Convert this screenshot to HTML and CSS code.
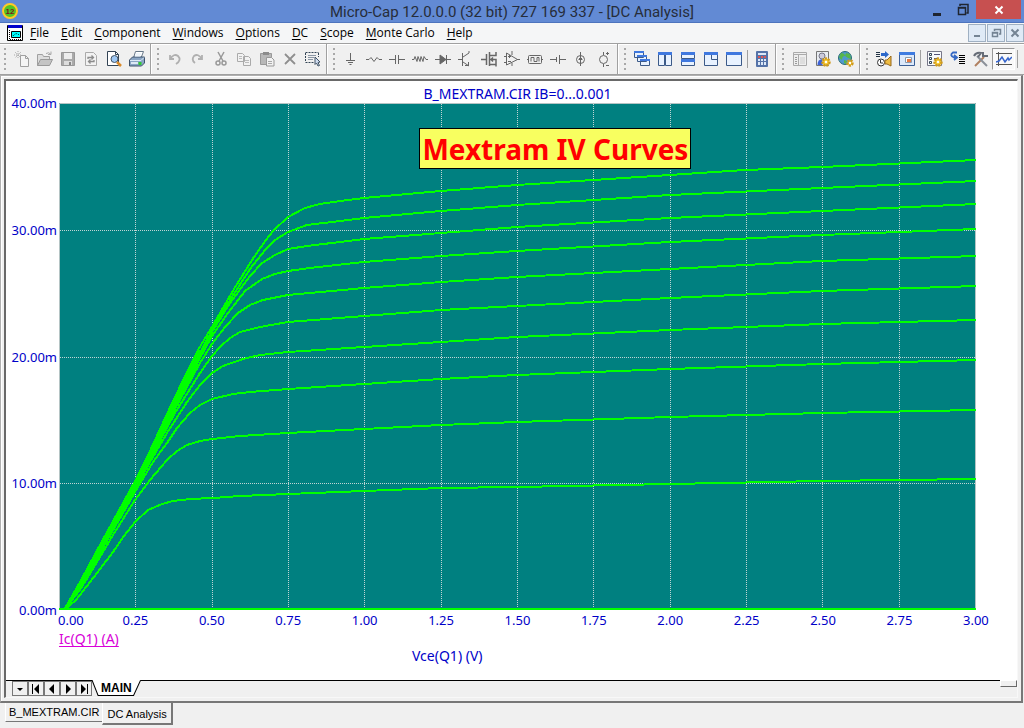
FILE: index.html
```html
<!DOCTYPE html>
<html lang="en">
<head>
<meta charset="utf-8">
<title>Micro-Cap 12.0.0.0 (32 bit) 727 169 337 - [DC Analysis]</title>
<link rel="stylesheet" href="styles.css">
</head>
<body>
<header class="titlebar">
  <svg class="app-icon" width="20" height="20" viewBox="0 0 20 20" aria-hidden="true"><circle cx="10" cy="11" r="7" fill="#52c424" stroke="#ffc928" stroke-width="2"/><text class="app-num" x="10" y="14" text-anchor="middle">12</text></svg>
  <h1 class="title">Micro-Cap 12.0.0.0 (32 bit) 727 169 337 - [DC Analysis]</h1>
  <div class="win-buttons">
    <button class="win" aria-label="Minimize"><svg width="12" height="14"><path d="M2 11.5h8" stroke="#1f2530" stroke-width="3"/></svg></button>
    <button class="win" aria-label="Restore"><svg width="12" height="14"><path d="M3 3V1.5h8V10H9.500M1.500 4.500h7v7h-7zM1 5h8" fill="none" stroke="#1f2530" stroke-width="1.500"/></svg></button>
    <button class="win win-close" aria-label="Close"><svg width="10" height="10"><path d="M1.500 1.500l7 7m0-7l-7 7" stroke="#fff" stroke-width="2"/></svg></button>
  </div>
</header>

<nav class="menubar">
  <svg class="doc-icon" width="16" height="16" viewBox="0 0 16 16" aria-hidden="true"><path d="M.5.5h15v15H.5z" fill="#fff" stroke="#000"/><path d="M1 0h14v3H1z" fill="#00c"/><path d="M4.500 6.500h9v6h-9z" fill="#0ff" stroke="#000"/><path d="M6 11q3-4 6-1M2.500 5v9M3 14.500h11" fill="none" stroke="#000" stroke-dasharray="1 1"/></svg>
  <button><u>F</u>ile</button><button><u>E</u>dit</button><button><u>C</u>omponent</button><button><u>W</u>indows</button><button><u>O</u>ptions</button><button><u>D</u>C</button><button><u>S</u>cope</button><button><u>M</u>onte Carlo</button><button><u>H</u>elp</button>
  <div class="child-buttons">
    <button aria-label="Minimize document"><svg width="12" height="12"><path d="M3 9h6" stroke="#748494" stroke-width="2"/></svg></button>
    <button aria-label="Restore document"><svg width="12" height="12"><path d="M4.500 4V2.500h6V7H9M2.500 5.500h5v4h-5zM4 2.500h7M2 6h6" fill="none" stroke="#748494" stroke-width="1.500"/></svg></button>
    <button aria-label="Close document"><svg width="12" height="12"><path d="M2.500 2.500l7 7m0-7l-7 7" stroke="#748494" stroke-width="2"/></svg></button>
  </div>
</nav>

<div class="toolbar" role="toolbar" aria-label="Main">
  <div class="group"><i class="grip"></i>
    <button aria-label="New"><svg viewBox="0 0 16 16"><path d="M6.500 4.500h5l3 3v8h-8z" fill="#f5f5f5" stroke="#a0a0a0"/><path d="M11.500 4.500v3h3" fill="none" stroke="#a0a0a0"/><path d="M4 0v8M0 4h8M1 1l6 6M7 1L1 7" stroke="#aaa" stroke-dasharray="1 1"/></svg></button>
    <button aria-label="Open"><svg viewBox="0 0 16 16"><path d="M.5 14.500v-11h5l1 2h6v3" fill="#ddd" stroke="#a0a0a0"/><path d="M.5 14.500l3-6h12l-3 6z" fill="#c4c4c4" stroke="#999"/><path d="M9 2.500q3-2 5 1m0-3v3h-3" fill="none" stroke="#aaa"/></svg></button>
    <button aria-label="Save"><svg viewBox="0 0 16 16"><path d="M1.500 1.500h13v13h-13z" fill="#aaa" stroke="#999"/><path d="M4 2h8v6H4z" fill="#eee"/><path d="M4 10h8v4H4z" fill="#ddd"/><path d="M9 11h2v3H9z" fill="#888"/></svg></button>
    <button aria-label="Revert"><svg viewBox="0 0 16 16"><path d="M2.500 1.500h8l3 3v10h-11z" fill="#f2f2f2" stroke="#aaa"/><path d="M5 8V6.500h5M8.500 4.500l2 2-2 2M11 9v1.500H6M7.500 8.500l-2 2 2 2" fill="none" stroke="#8c8c8c" stroke-width="1.300"/></svg></button>
    <button aria-label="Print preview"><svg viewBox="0 0 16 16"><path d="M1.500.5h8l3 3v11h-11z" fill="#fff" stroke="#345"/><path d="M9.500.5v3h3" fill="none" stroke="#345"/><circle cx="8.500" cy="8" r="3.500" fill="#9ec8f5" stroke="#456"/><path d="M11 11l4 4" stroke="#d98a2b" stroke-width="2.500"/></svg></button>
    <button aria-label="Print"><svg viewBox="0 0 16 16"><path d="M4.500 7l2-6.500h8L12 7" fill="#fff" stroke="#678"/><path d="M.5 9l3-3h12v6l-3 3H.5z" fill="#8aa5c4" stroke="#3d526c"/><path d="M1 9.500h11l3-3M7 3h5M6 5h5" fill="none" stroke="#dceaf6"/><path d="M2 11h7v2H2z" fill="#dce8f4"/><path d="M9.500 11h3v3h-3z" fill="#32c932"/></svg></button>
  </div>
  <div class="group"><i class="grip"></i>
    <button aria-label="Undo"><svg viewBox="0 0 16 16"><path d="M3 4v4h4M3 8q4-6 8-3 4 4-2 8" fill="none" stroke="#b0b0b0" stroke-width="1.800"/></svg></button>
    <button aria-label="Redo"><svg viewBox="0 0 16 16"><path d="M12 4v4H8M12 8Q8 2 4 5q-3 4 1 7" fill="none" stroke="#b0b0b0" stroke-width="1.800"/></svg></button>
    <button aria-label="Cut"><svg viewBox="0 0 16 16"><path d="M5 1l5 9M11 1L6 10" stroke="#999" stroke-width="1.500"/><circle cx="5" cy="12" r="2" fill="none" stroke="#999" stroke-width="1.500"/><circle cx="11" cy="12" r="2" fill="none" stroke="#999" stroke-width="1.500"/></svg></button>
    <button aria-label="Copy"><svg viewBox="0 0 16 16"><path d="M1.500 2.500h5l2 2v6h-7zM7.500 5.500h5l2 2v7h-7z" fill="#f2f2f2" stroke="#aaa"/><path d="M3 5.500h3M3 7.500h3M9 9.500h4M9 11.500h4" stroke="#bbb"/></svg></button>
    <button aria-label="Paste"><svg viewBox="0 0 16 16"><path d="M1.500 2.500h11v11h-11z" fill="#b8b8b8" stroke="#999"/><path d="M4 1h6v3H4z" fill="#8c8c8c"/><path d="M7.500 6.500h5l2.500 2.500v6H7.500z" fill="#f2f2f2" stroke="#999"/><path d="M9 10.500h4M9 12.500h4" stroke="#aaa"/></svg></button>
    <button aria-label="Delete"><svg viewBox="0 0 16 16"><path d="M3 3l10 10M13 3L3 13" stroke="#8f8f8f" stroke-width="1.800"/></svg></button>
    <button aria-label="Select mode"><svg viewBox="0 0 16 16"><path d="M.5 1.500h13M.5 2v9M.5 11.500h9M13.500 2v4" fill="none" stroke="#345" stroke-dasharray="2 1"/><path d="M3 4.500h8M3 6.500h6M3 8.500h5" stroke="#8a96a4"/><path d="M10 6l5 5-2 .5 1.500 3-1.500.5-1.500-3-1.500 1.500z" fill="#cfdcf0" stroke="#456"/></svg></button>
  </div>
  <div class="group parts"><i class="grip"></i>
    <button aria-label="Ground"><svg viewBox="0 0 16 16"><path d="M7.500 2v7M3 9.500h9M5 11.500h5M6.500 13.500h2"/></svg></button>
    <button aria-label="Resistor"><svg viewBox="0 0 16 16"><path d="M0 8.500h3l2-2 3 4 3-4 2 2h3"/></svg></button>
    <button aria-label="Capacitor"><svg viewBox="0 0 16 16"><path d="M0 8.500h6.500M9.500 8.500H16M6.500 4v9M9.500 4v9"/></svg></button>
    <button aria-label="Inductor"><svg viewBox="0 0 16 16"><path d="M0 8.500h2l1-3 2 5 1-5 2 5 1-5 2 5 1-5 2 3h2"/></svg></button>
    <button aria-label="Diode"><svg viewBox="0 0 16 16"><path d="M0 8.500h16M11.500 4v9"/><path d="M5 4l6 4.500L5 13z" class="solid"/></svg></button>
    <button aria-label="NPN transistor"><svg viewBox="0 0 16 16"><path d="M0 8.500h4M4.500 2v13M5 6l6-4V0M5 11l6 4M7 14.500h4M10.500 11v4"/></svg></button>
    <button aria-label="MOSFET"><svg viewBox="0 0 16 16"><path d="M0 8.500h5M5.500 3v11M8.500 1v14M9 4.500h6V1M9 8.500h6v7M9 13.500h6M10 8.500l2-2m-2 2l2 2" stroke-width="1.500"/></svg></button>
    <button aria-label="Op amp"><svg viewBox="0 0 16 16"><path d="M2.500 2v12l11-5.500zM0 5.500h3M0 11.500h3M13 8.500h3M4 5.500h3M4 10.500h3M5.500 4v3M8 0v4M8 12v3"/></svg></button>
    <button aria-label="Macro"><svg viewBox="0 0 16 16"><rect x="1.500" y="4.500" width="13" height="8" rx="1"/><path d="M0 8.500h1M15 8.500h1M4 10.500v-4h3v4h3v-4h2v4"/></svg></button>
    <button aria-label="Battery"><svg viewBox="0 0 16 16"><path d="M0 8.500h6M9 8.500h7M6.500 6v5M9.500 4v9"/></svg></button>
    <button aria-label="Current source"><svg viewBox="0 0 16 16"><circle cx="7.500" cy="8.500" r="4"/><path d="M7.500 1v14M5.500 8.500l2-2 2 2M6 8.500h3"/></svg></button>
    <button aria-label="Voltage source"><svg viewBox="0 0 16 16"><circle cx="7.500" cy="8.500" r="4"/><path d="M7.500 1v3M7.500 13v3M10 2.500h3M11.500 1v3M10 14.500h3"/></svg></button>
  </div>
  <div class="group windows"><i class="grip"></i>
    <button aria-label="Cascade"><svg viewBox="0 0 16 16"><path d="M.5.5h9v6h-9zM3.500 4.500h9v6h-9zM6.500 8.500h9v6h-9z"/><path class="bar" d="M0 0h10v2H0zM3 4h10v2H3zM6 8h10v2H6z"/></svg></button>
    <button aria-label="Tile vertical"><svg viewBox="0 0 16 16"><path d="M1.500 1.500h6v13h-6zM8.500 1.500h6v13h-6z"/><path class="bar" d="M1 1h7v3H1zM8 1h7v3H8z"/></svg></button>
    <button aria-label="Tile horizontal"><svg viewBox="0 0 16 16"><path d="M1.500 1.500h13v6h-13zM1.500 8.500h13v6h-13z"/><path class="bar" d="M1 1h14v3H1zM1 8h14v3H1z"/></svg></button>
    <button aria-label="Overlap"><svg viewBox="0 0 16 16"><path d="M1.500 1.500h13v13h-13zM8.500 1.500h6v7h-6z"/><path class="bar" d="M1 1h14v3H1z"/></svg></button>
    <button aria-label="Maximize"><svg viewBox="0 0 16 16"><path d="M.5 1.500h15v13H.5z"/><path class="bar" d="M0 1h16v3H0z"/></svg></button>
    <i class="sep"></i>
    <button aria-label="Calculator"><svg viewBox="0 0 16 16"><rect class="case" x="2" y="0" width="12" height="16" rx="1"/><path class="lcd" d="M4 2h8v2H4z"/><path class="key" d="M4 5h2v2H4zM7 5h2v2H7zM10 5h2v2h-2z"/><path class="lcd" d="M4 8h2v2H4zM7 8h2v2H7zM10 8h2v2h-2zM4 11h2v3H4zM7 11h2v3H7zM10 11h2v3h-2z"/></svg></button>
  </div>
  <div class="group"><i class="grip"></i>
    <button aria-label="Component panel"><svg viewBox="0 0 16 16"><path d="M1.500 1.500h13v13h-13z" fill="#eee" stroke="#aaa"/><path d="M2 3.500h12M6.500 4v10" stroke="#aaa"/><path d="M3 6.500h2M3 8.500h2M3 10.500h2M3 12.500h2" stroke="#999"/><path d="M8 6h5v7H8z" fill="#ddd"/></svg></button>
    <button aria-label="User settings"><svg viewBox="0 0 16 16"><path d="M1.500.5h12v14h-12z" fill="#e9edf2" stroke="#777"/><circle cx="7" cy="5" r="3" fill="#ccd" stroke="#778"/><path d="M2.500 14q0-6 5-6v6z" fill="#3d62d8"/><circle cx="11" cy="11" r="3.500" fill="#f5ca35" stroke="#d09a1c" stroke-width="2.500" stroke-dasharray="2 1"/><circle cx="11" cy="11" r="1.200" fill="#fff"/></svg></button>
    <button aria-label="Web"><svg viewBox="0 0 16 16"><circle cx="7" cy="7" r="6.500" fill="#4f98cf" stroke="#276b78"/><path d="M3 2q4 0 4 3-3 0-3 4-3-2-3-3zM8 2l4 1 1 5-3-1-3-2zM6 9l3 1-1 3-2-1z" fill="#57b64b"/><circle cx="12" cy="12" r="2.500" fill="#f5ca35" stroke="#d09a1c" stroke-width="2.500" stroke-dasharray="2 1"/><circle cx="12" cy="12" r="1.200" fill="#fff"/></svg></button>
  </div>
  <div class="group last"><i class="grip"></i>
    <button aria-label="Run"><svg viewBox="0 0 16 16"><path d="M0 1.500h4M0 3.500h4M0 5.500h4" stroke="#234"/><path d="M5 2h4V0l4 3.500L9 7V5H5z" fill="#2b67c9"/><circle cx="5" cy="11.500" r="3.500" fill="#fff" stroke="#333"/><path d="M4.500 9v3H7" fill="none" stroke="#333"/><path d="M9 9h2l4-4v10l-4-2H9z" fill="#eebc42" stroke="#96681c"/></svg></button>
    <button aria-label="Analysis window"><svg viewBox="0 0 16 16"><path d="M.5 1.500h15v13H.5z" fill="#dce9fb" stroke="#3b5f96"/><path d="M0 1h16v3H0z" fill="#3e7be0"/><path d="M6.500 6.500h6v5h-6z" fill="#fff" stroke="#89a"/><path d="M8 8h4v3H8z" fill="#e87840"/></svg></button>
    <i class="sep"></i>
    <button aria-label="Analysis limits"><svg viewBox="0 0 16 16"><path d="M.5.5h14v14H.5z" fill="#f7f9fc" stroke="#778"/><path d="M2.500 2.500h2v2h-2zM2.500 6.500h2v2h-2zM2.500 10.500h2v2h-2z" fill="none" stroke="#345"/><path d="M7 3.500h6M7 7.500h4" stroke="#557"/><circle cx="11" cy="11" r="3.500" fill="#f5ca35" stroke="#d09a1c" stroke-width="2.500" stroke-dasharray="2 1"/><circle cx="11" cy="11" r="1.200" fill="#fff"/></svg></button>
    <button aria-label="Stepping"><svg viewBox="0 0 16 16"><path d="M7 1.500H3q-4 3 1 5h3M4 4l3 2.500L4 9" fill="none" stroke="#3569c4" stroke-width="1.800"/><path d="M9 4.500h6M9 6.500h6M9 8.500h6M9 10.500h6M9 12.500h6" stroke="#000"/></svg></button>
    <button aria-label="Tools"><svg viewBox="0 0 16 16"><path d="M2 15l9-9" stroke="#b08060" stroke-width="2"/><path d="M4 5l10 10" stroke="#8a8f98" stroke-width="2"/><path d="M10 1v4h5M1 5q2-4 7-3L5 6" fill="none" stroke="#666c76" stroke-width="2"/></svg></button>
    <button class="pressed" aria-label="Plot" aria-pressed="true"><svg viewBox="0 0 16 16"><path d="M2.500 1v14M0 2.500h16M0 13.500h16" stroke="#555"/><path d="M0 11l3-1 3-4 3 5 3-4 1 2 3-3" fill="none" stroke="#3564cc" stroke-width="1.500"/></svg></button>
    <i class="sep"></i>
  </div>
</div>

<main class="child">
  <section class="pane">
    <div class="chart">
      <h2 class="chart-title">B_MEXTRAM.CIR IB=0...0.001</h2>
      <div class="y-axis"><span>40.00m</span><span>30.00m</span><span>20.00m</span><span>10.00m</span><span>0.00m</span></div>
      <div class="plot">
        <svg class="plot-svg" viewBox="59 103 917 507" preserveAspectRatio="none" role="img" aria-label="Collector current against collector-emitter voltage">
          <path class="gridline" d="M135.500 104V610M212.500 104V610M288.500 104V610M364.500 104V610M441.500 104V610M517.500 104V610M593.500 104V610M670.500 104V610M746.500 104V610M822.500 104V610M899.500 104V610M60 230.500H976M60 357.500H976M60 483.500H976"/>
          <path class="edge" d="M59.500 610V103.500H975.500V610"/>
          <polygon class="bundle" points="64,610 76,587 100,544 134,482 150,450 173,401 198,350 202,351 176,405 151,459 137,487 101,550 80,588 66,610"/>
          <g class="curves">
            <polyline points="59,609 976,609"/>
            <polyline points="64,610 76,600 97,573 113,552 124,536 135,522 148,510 162,504 173,501 190,499 213,498 240,496 288,494 364,491 441,488 517,487 670,484 822,481 976,479"/>
            <polyline points="64,610 80,590 100,557 113,535 135,500 150,480 167,460 177,451 187,445 200,441 212,439 240,436 288,433 364,429 441,425 517,422 670,417 822,413 976,410"/>
            <polyline points="64,610 80,588 100,553 135,492 153,462 167,443 177,428 190,413 200,405 212,399 233,394 250,392 288,389 364,384 441,379 517,375 670,369 822,364 976,360"/>
            <polyline points="64,610 80,586 100,550 135,489 150,462 167,433 187,402 200,385 212,373 223,366 243,359 260,355 288,352 364,347 441,342 517,337 670,330 822,324 976,320"/>
            <polyline points="64,610 80,585 100,549 135,487 150,459 175,413 200,373 212,356 220,347 230,338 240,332 260,327 288,322 364,316 441,310 517,306 670,298 822,291 976,286"/>
            <polyline points="64,610 80,584 100,548 135,486 150,457 175,409 200,363 212,344 225,327 238,313 250,305 263,300 288,295 364,288 441,282 517,277 670,269 822,261 976,256"/>
            <polyline points="64,610 80,583 100,547 135,485 150,455 175,407 200,358 212,336 228,313 245,291 262,279 275,274 288,271 310,268 364,262 441,256 517,251 670,242 822,235 976,229"/>
            <polyline points="64,610 80,583 100,546 135,484 150,454 175,405 200,355 212,332 230,303 250,276 262,263 275,255 288,249 307,246 340,242 364,239 441,233 517,227 670,218 822,211 976,204"/>
            <polyline points="64,610 80,582 100,546 134,484 150,453 175,403 200,353 212,330 230,300 250,269 265,250 275,240 288,232 307,225 340,221 364,218 441,211 517,205 670,195 822,188 976,181"/>
            <polyline points="64,610 80,582 100,545 134,483 150,451 173,401 198,350 213,325 234,289 254,257 266,240 273,231 288,217 305,208 320,204 340,201 364,198 441,191 517,185 593,180 670,175 745,170 822,167 976,160"/>
          </g>
        </svg>
        <div class="note">Mextram IV Curves</div>
      </div>
      <div class="x-axis"><span>0.00</span><span>0.25</span><span>0.50</span><span>0.75</span><span>1.00</span><span>1.25</span><span>1.50</span><span>1.75</span><span>2.00</span><span>2.25</span><span>2.50</span><span>2.75</span><span>3.00</span></div>
      <a class="trace" href="#trace">Ic(Q1) (A)</a>
      <div class="x-name">Vce(Q1) (V)</div>
    </div>
    <div class="pages">
      <div class="page-nav">
        <button aria-label="Page list"><svg viewBox="0 0 12 12"><path d="M3 5h6L6 8z"/></svg></button>
        <button aria-label="First page"><svg viewBox="0 0 12 12"><path d="M2 1h1v10H2zM9 1v10L4 6z"/></svg></button>
        <button aria-label="Previous page"><svg viewBox="0 0 12 12"><path d="M8 1v10L3 6z"/></svg></button>
        <button aria-label="Next page"><svg viewBox="0 0 12 12"><path d="M4 1v10l5-5z"/></svg></button>
        <button aria-label="Last page"><svg viewBox="0 0 12 12"><path d="M3 1v10l5-5zM9 1h1v10H9z"/></svg></button>
      </div>
      <button class="page-tab"><svg viewBox="0 0 48 16" preserveAspectRatio="none" aria-hidden="true"><path d="M0 0l6 15.500h35L48 0" fill="#fff"/><path d="M0 0l6 15.500h35L48 0" fill="none" stroke="#000"/></svg><span>MAIN</span></button>
      <div class="rule"></div>
      <div class="splitter"></div>
    </div>
  </section>
</main>

<footer class="docs">
  <button class="doc">B_MEXTRAM.CIR</button><button class="doc active">DC Analysis</button>
</footer>
</body>
</html>
```
FILE: styles.css
```css
* { box-sizing: border-box; }
body {
  margin: 0;
  height: 100vh;
  display: flex;
  flex-direction: column;
  background: #f0f0f0;
  font-family: "Noto Sans", "Open Sans", sans-serif;
  font-size: 12px;
  color: #000;
  overflow: hidden;
}
button {
  margin: 0;
  padding: 0;
  border: 0;
  background: none;
  font: inherit;
  color: inherit;
}
svg { display: block; }

/* title bar */
.titlebar {
  flex: none;
  height: 23px;
  display: grid;
  grid-template-columns: 102px 1fr 102px;
  align-items: start;
  background: #628ad4;
  border-bottom: 1px solid #4d74bd;
}
.app-num { font: bold 8px "Liberation Sans", sans-serif; fill: #7c1818; }
.title {
  margin: 0;
  font: 15px/24px Roboto, sans-serif;
  color: #262d3a;
  text-align: center;
  white-space: nowrap;
}
.win-buttons { display: flex; justify-content: flex-end; padding-right: 3px; }
.win { width: 26px; height: 19px; display: grid; place-items: center; }
.win-close { width: 45px; background: #c75050; }

/* menu bar */
.menubar {
  flex: none;
  height: 20px;
  display: flex;
  align-items: center;
  padding-left: 7px;
  background: #f5f6f7;
  font: 12px/18px "Open Sans", sans-serif;
}
.doc-icon { margin-right: 1px; }
.menubar > button { padding: 0 6px; }
.menubar u { text-underline-offset: 2px; }
.child-buttons { margin-left: auto; display: flex; gap: 1px; }
.child-buttons button {
  width: 18px;
  height: 18px;
  display: grid;
  place-items: center;
  border: 1px solid #9fb0c2;
  background: #dfeaf6;
}

/* toolbar */
.toolbar {
  flex: none;
  height: 32px;
  display: flex;
  border-top: 1px solid #a0a0a0;
  border-bottom: 1px solid #a0a0a0;
  box-shadow: inset 0 1px #fff;
  overflow: hidden;
}
.group {
  flex: none;
  display: flex;
  align-items: center;
  padding: 0 3px 0 4px;
  border-right: 1px solid #fff;
  box-shadow: inset -1px 0 #a0a0a0;
  margin-right: 1px;
}
.group.last { border: 0; box-shadow: none; }
.grip {
  width: 2px;
  height: 22px;
  margin-right: 4px;
  background: repeating-linear-gradient(#a8a8a8 0 2px, transparent 2px 5px);
}
.group button { width: 23px; height: 22px; display: grid; place-items: center; }
.group button svg { width: 16px; height: 16px; }
.group .pressed { border: 1px solid; border-color: #999 #fff #fff #999; background: #f9f9f9; }
.sep { width: 1px; height: 18px; margin: 0 2px; background: #a0a0a0; }
.parts svg * { fill: none; stroke: #666; }
.parts .solid { fill: #666; }
.windows svg path { fill: #e8f2ff; stroke: #3c5a88; }
.windows svg .bar { fill: #3f78df; stroke: none; }
.windows svg .case { fill: #5573a8; }
.windows svg .lcd { fill: #dce8f8; stroke: none; }
.windows svg .key { fill: #d85858; stroke: none; }

/* document window */
.child {
  flex: 1;
  min-height: 0;
  display: flex;
  margin-right: 1px;
  padding: 3px;
  border: 1px solid #b0b0b0;
  border-right: 2px solid #777;
  border-bottom: 2px solid #777;
  background: #f0f0f0;
  box-shadow: inset 1px 1px #fff;
}
.pane {
  flex: 1;
  min-width: 0;
  display: flex;
  flex-direction: column;
  border: 1px solid #f8f8f8;
  border-left: 2px solid #696969;
  border-top: 2px solid #696969;
  background: #fff;
}
.chart {
  flex: 1;
  min-height: 0;
  display: grid;
  grid-template-columns: 53px 1fr;
  grid-template-rows: 22px 1fr 20px 17px 33px;
  padding-right: 41px;
  color: #0000c8;
  font-size: 14px;
  line-height: 18px;
}
.chart > * { grid-column: 2; }
.chart-title { margin: 0; padding-top: 4px; font: inherit; text-align: center; }
.chart .y-axis {
  grid-column: 1;
  display: flex;
  flex-direction: column;
  justify-content: space-between;
  margin: -9px 2px -9px 0;
  font-size: 13px;
  text-align: right;
}
.plot { position: relative; background: #008080; min-height: 0; }
.plot-svg { width: 100%; height: 100%; }
.gridline { fill: none; stroke: #c0d4d4; stroke-dasharray: 1 1; shape-rendering: crispEdges; }
.edge { fill: none; stroke: #b4c4c4; }
.bundle { fill: #00ff00; shape-rendering: crispEdges; }
.curves { fill: none; stroke: #00ff00; stroke-width: 2; shape-rendering: crispEdges; }
.note {
  position: absolute;
  left: 39.3%;
  top: 25px;
  padding: 1px 2px 0;
  border: 1px solid #000;
  background: #f8ff60;
  color: #ff0000;
  font-size: 28px;
  font-weight: bold;
  line-height: 38px;
  white-space: nowrap;
}
.x-axis { display: flex; justify-content: space-between; margin: 1px -15px 0; font-size: 13px; }
.x-axis span { width: 30px; text-align: center; white-space: nowrap; }
.x-axis span:first-child { padding-left: 14px; }
.trace { justify-self: start; color: #d800d8; text-underline-offset: 2px; }
.x-name { padding-left: 353px; white-space: nowrap; }

/* page selector */
.pages { flex: none; height: 17px; display: flex; background: #f0f0f0; }
.page-nav { display: flex; padding-left: 6px; border-top: 1px solid #000; }
.page-nav button {
  width: 16px;
  height: 15px;
  display: grid;
  place-items: center;
  border: 1px solid;
  border-color: #fff #696969 #696969 #fff;
  outline: 1px solid #777;
  outline-offset: -1px;
}
.page-nav svg { width: 12px; height: 12px; }
.page-tab { position: relative; height: 16px; padding: 0 9px; font: bold 12px/15px "Liberation Sans", sans-serif; }
.page-tab svg { position: absolute; inset: 0; width: 100%; height: 100%; }
.page-tab span { position: relative; }
.rule { flex: 1; border-top: 1px solid #000; }
.splitter { width: 17px; height: 7px; border: 1px solid; border-color: #fff #696969 #696969 #fff; }

/* open documents */
.docs {
  flex: none;
  height: 25px;
  display: flex;
  align-items: flex-start;
  padding-left: 5px;
  font: 11px/18px "Liberation Sans", sans-serif;
}
.doc {
  height: 19px;
  padding: 0 3px;
  border-left: 1px solid #fff;
  border-bottom: 1px solid #777;
}
.doc.active { height: 22px; padding: 2px 4px 0; border-right: 2px solid #777; border-bottom-width: 2px; }
```
